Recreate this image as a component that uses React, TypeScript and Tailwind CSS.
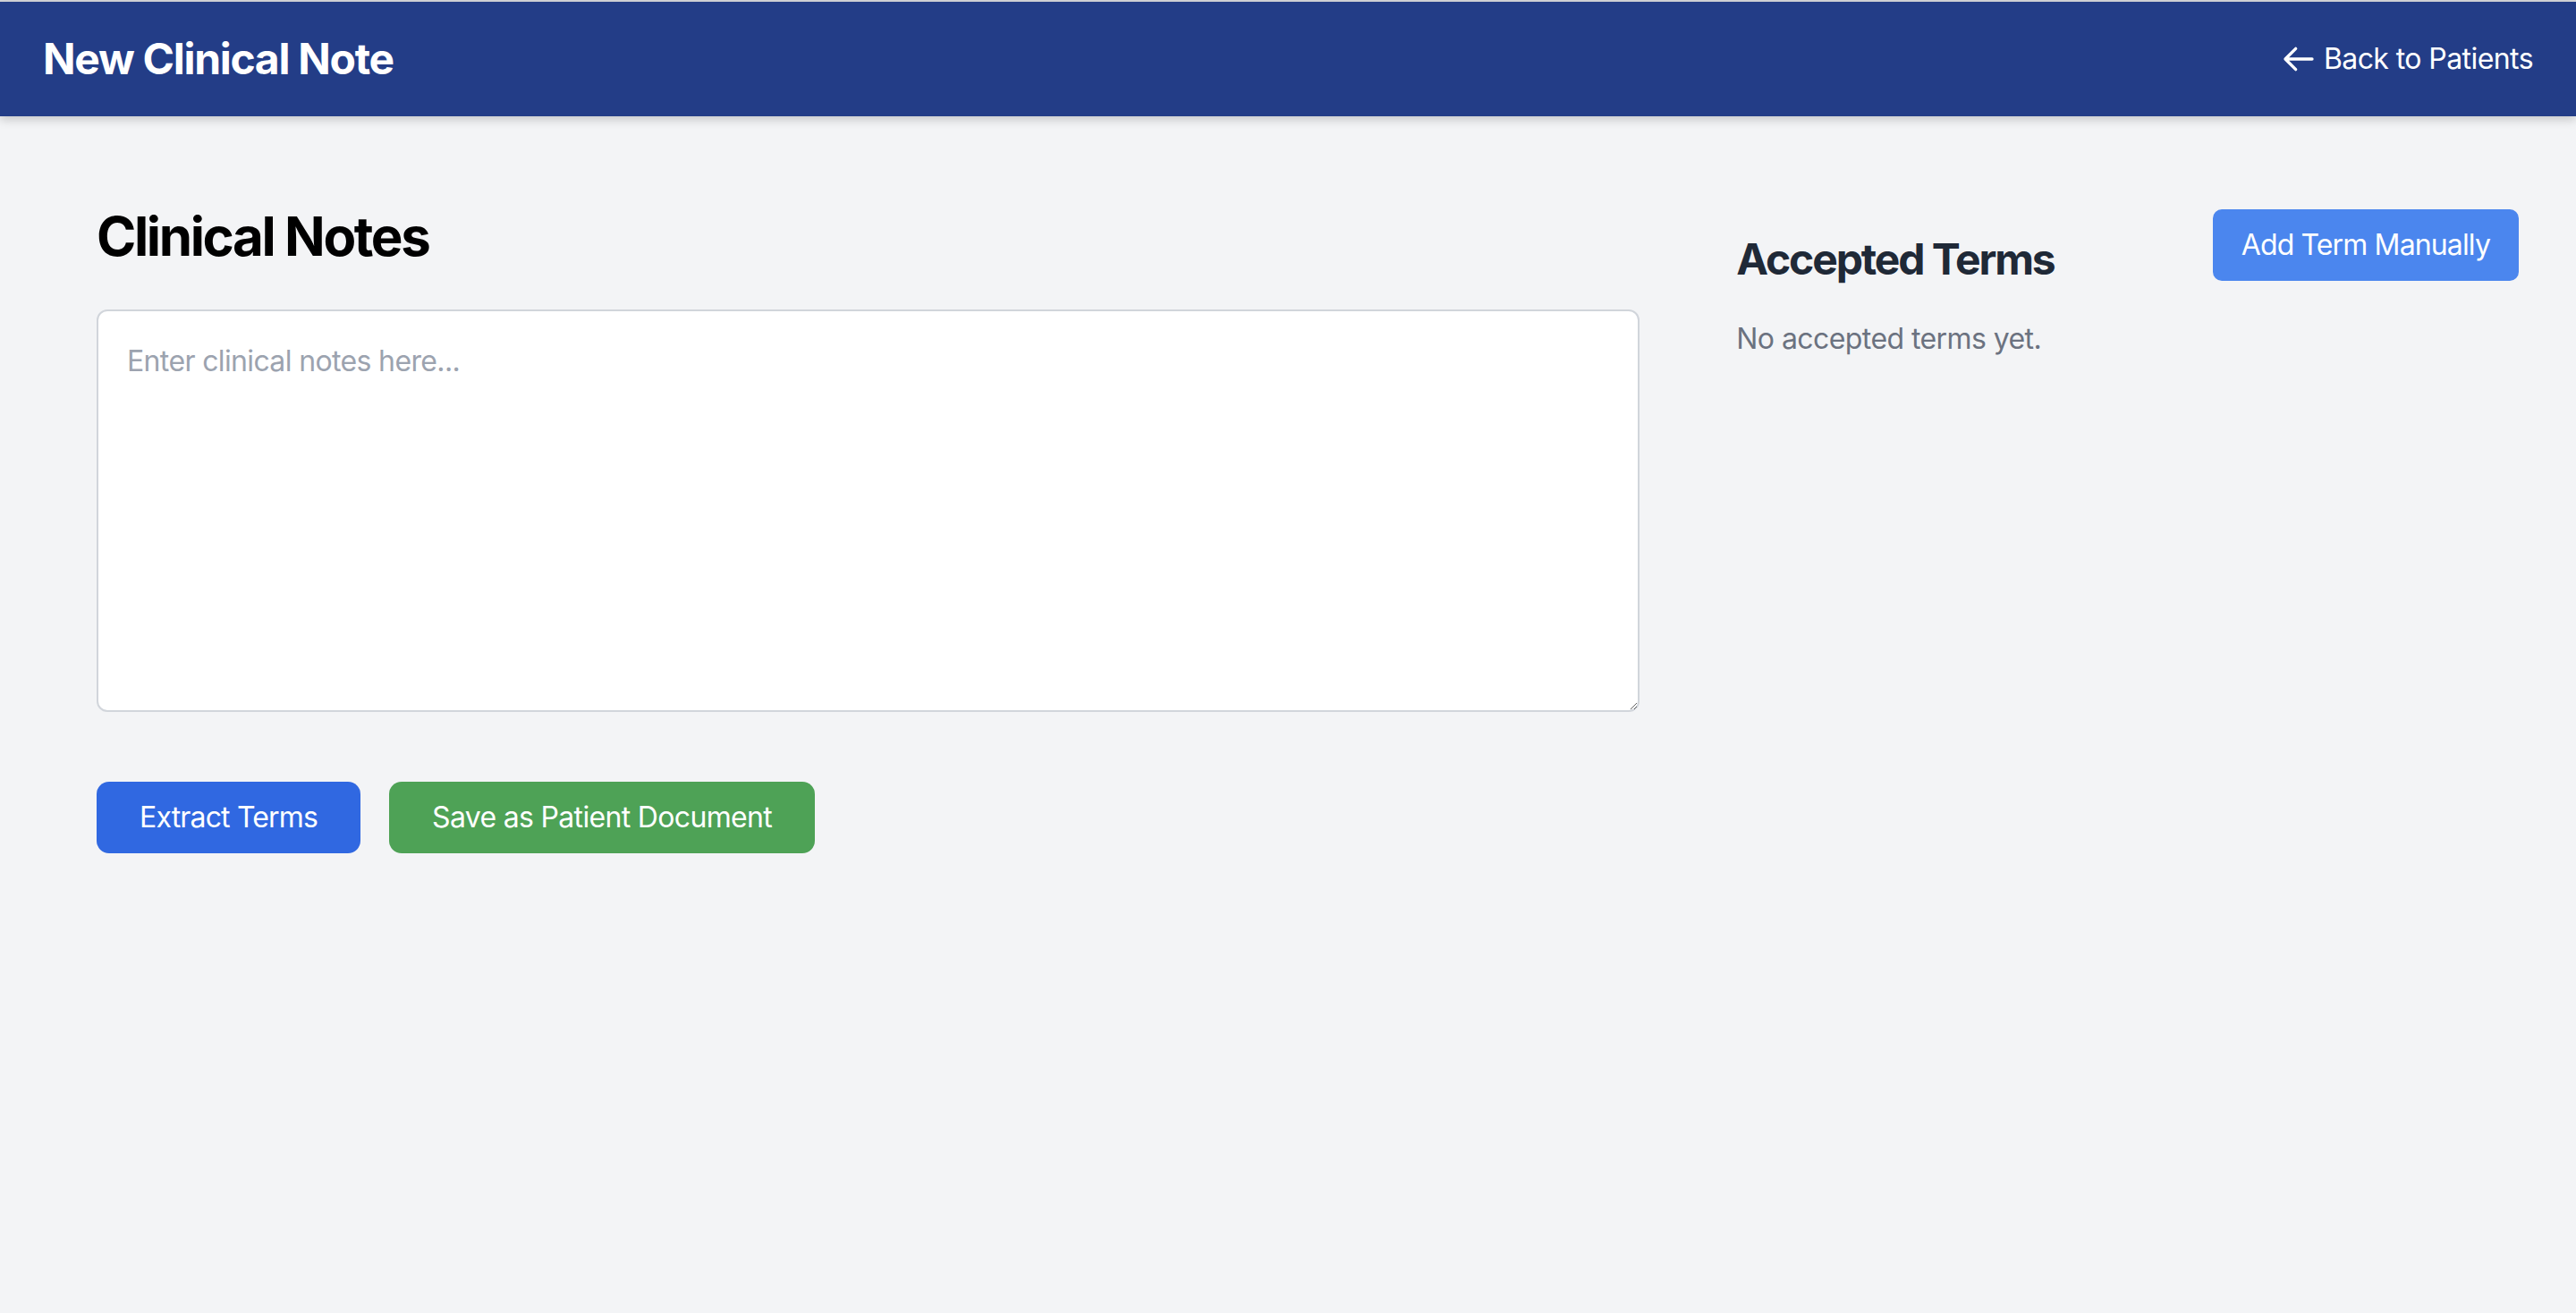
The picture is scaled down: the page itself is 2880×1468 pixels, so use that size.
import React from "react";

function ArrowLeft() {
  return (
    <svg
      className="w-[40px] h-[40px]"
      viewBox="0 0 24 24"
      fill="none"
      stroke="currentColor"
      strokeWidth={2}
      strokeLinecap="round"
      strokeLinejoin="round"
    >
      <path d="M10 19l-7-7m0 0l7-7m-7 7h18" />
    </svg>
  );
}

export default function App() {
  return (
    <div className="min-h-screen bg-[#f3f4f6] font-['Inter','Liberation_Sans',sans-serif] border-t-2 border-[#d4d6da] tracking-[-0.02em]">
      <header className="h-[128px] bg-[#233d87] shadow-[0_4px_10px_rgba(0,0,0,0.18)] flex items-center justify-between px-[48px]">
        <h1 className="text-[48px] leading-[64px] font-bold text-white tracking-[-0.027em]">
          New Clinical Note
        </h1>
        <a className="flex items-center gap-[8px] text-white text-[32px] leading-[48px] cursor-pointer tracking-[-0.018em]">
          <ArrowLeft />
          <span>Back to Patients</span>
        </a>
      </header>

      <main className="px-[64px] pt-[98px] grid grid-cols-3 gap-[64px]">
        <section className="col-span-2 px-[44px]">
          <h2 className="text-[60px] leading-[72px] font-bold text-black tracking-[-0.04em]">
            Clinical Notes
          </h2>
          <textarea
            className="mt-[46px] block w-full h-[450px] bg-white border-2 border-[#d1d5db] rounded-[12px] px-[32px] py-[32px] text-[32px] leading-[48px] text-gray-900 tracking-[-0.02em] placeholder:text-[#9ca3af] outline-none"
            placeholder="Enter clinical notes here..."
          />
          <div className="mt-[78px] flex gap-[32px]">
            <button className="h-[80px] px-[48px] rounded-[14px] bg-[#3068e1] text-white text-[32px] leading-[48px] tracking-[-0.026em]">
              Extract Terms
            </button>
            <button className="h-[80px] px-[48px] rounded-[14px] bg-[#4ea256] text-white text-[32px] leading-[48px] tracking-[-0.021em]">
              Save as Patient Document
            </button>
          </div>
        </section>

        <aside>
          <div className="flex items-start justify-between">
            <h2 className="mt-[30px] text-[48px] leading-[64px] font-bold text-[#1f2937] tracking-[-0.044em]">
              Accepted Terms
            </h2>
            <button className="mt-[6px] h-[80px] px-[32px] rounded-[10px] bg-[#4b86ee] text-white text-[32px] leading-[48px] tracking-[-0.027em]">
              Add Term Manually
            </button>
          </div>
          <p className="mt-[33px] text-[32px] leading-[48px] text-[#6b7280] tracking-[-0.018em]">
            No accepted terms yet.
          </p>
        </aside>
      </main>
    </div>
  );
}
